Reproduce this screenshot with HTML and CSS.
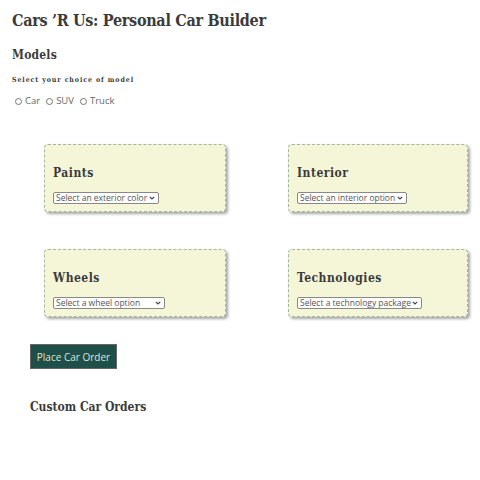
FILE: index.html
```html
<!DOCTYPE html>
<html>
<head>
<meta charset="utf-8">
<link rel="stylesheet" href="styles.css">
</head>
<body>
<h1 class="title">Cars ’R Us: Personal Car Builder</h1>
<h2 class="section">Models</h2>
<h3 class="prompt">Select your choice of model</h3>
<div class="radios">
  <label class="radio"><input type="radio" name="model"> Car</label>
  <label class="radio"><input type="radio" name="model"> SUV</label>
  <label class="radio"><input type="radio" name="model"> Truck</label>
</div>
<div class="grid">
  <div class="card">
    <h2 class="card-title">Paints</h2>
    <select class="sel"><option>Select an exterior color</option></select>
  </div>
  <div class="card">
    <h2 class="card-title">Interior</h2>
    <select class="sel"><option>Select an interior option</option></select>
  </div>
  <div class="card">
    <h2 class="card-title">Wheels</h2>
    <select class="sel wide"><option>Select a wheel option</option></select>
  </div>
  <div class="card">
    <h2 class="card-title">Technologies</h2>
    <select class="sel"><option>Select a technology package</option></select>
  </div>
</div>
<button class="order">Place Car Order</button>
<h2 class="orders">Custom Car Orders</h2>
</body>
</html>
```
FILE: styles.css
```css
body {
  margin: 0;
  padding: 9px 12px 8px;
  font-family: "Open Sans", "Noto Sans", sans-serif;
  color: #444;
  background: #fff;
}
.title, .section, .prompt, .card-title, .orders {
  font-family: "DejaVu Serif", serif;
  font-stretch: condensed;
  font-weight: bold;
  color: #3b3b3b;
  margin: 0;
}
.title {
  font-size: 16px;
  line-height: 24px;
  letter-spacing: -0.3px;
}
.section {
  font-size: 12px;
  margin-top: 14px;
  line-height: 16px;
  letter-spacing: 0.2px;
}
.prompt {
  font-size: 7px;
  letter-spacing: 0.9px;
  margin-top: 12px;
  line-height: 10px;
}
.radios {
  display: flex;
  gap: 6px;
  margin-top: 9px;
  font-size: 9.5px;
  color: #666;
  margin-left: 3px;
  line-height: 14px;
}
.radio {
  display: flex;
  align-items: center;
  gap: 3px;
}
.radio input {
  margin: 0;
  width: 7px;
  height: 7px;
}
.grid {
  display: grid;
  grid-template-columns: 182px 180px;
  column-gap: 62px;
  row-gap: 37px;
  margin: 36px 0 0 32px;
}
.card {
  height: 68px;
  box-sizing: border-box;
  background: #f5f5d8;
  border: 1px dashed #9fb8a3;
  border-radius: 4px;
  box-shadow: 2px 2px 3px rgba(0,0,0,0.35);
  padding: 21px 8px 0;
}
.card-title {
  font-size: 12px;
  line-height: 14px;
  letter-spacing: 0.5px;
  margin-bottom: 4px;
}
.sel {
  -webkit-appearance: none;
  appearance: none;
  font-family: "Open Sans", "Noto Sans", sans-serif;
  font-size: 8.5px;
  height: 12px;
  line-height: 10px;
  padding: 0 10px 0 2px;
  border: 1px solid #888;
  border-radius: 2px;
  background: #fff url("data:image/svg+xml,%3Csvg xmlns='http://www.w3.org/2000/svg' width='6' height='4' viewBox='0 0 6 4'%3E%3Cpath d='M0.8 0.8 L3 3 L5.2 0.8' fill='none' stroke='%23444' stroke-width='1.2'/%3E%3C/svg%3E") no-repeat right 3px center;
  color: #555;
}
.sel.wide { width: 112px; }
.order {
  display: block;
  margin: 27px 0 0 18px;
  background: #1f4f49;
  color: #d6e6dc;
  border: 1px solid #666;
  font-family: "Open Sans", "Noto Sans", sans-serif;
  font-size: 10px;
  padding: 0 4px;
  height: 25px;
  width: 87px;
}
.orders {
  font-size: 12px;
  margin: 31px 0 0 18px;
  letter-spacing: 0;
}
```
